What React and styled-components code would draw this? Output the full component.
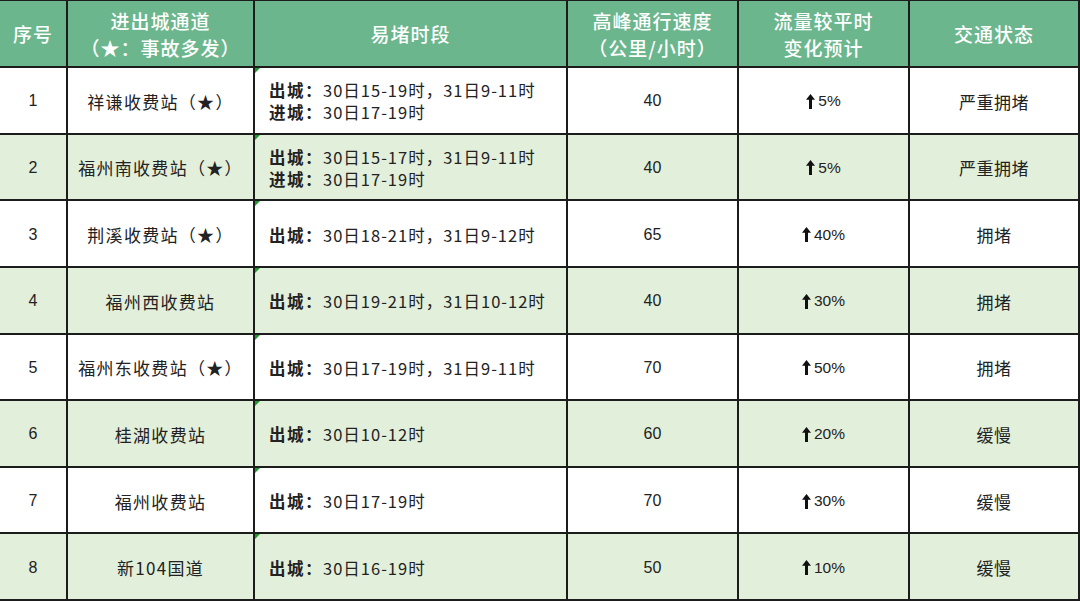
import React from 'react';
import styled, { createGlobalStyle } from 'styled-components';

const GlobalStyle = createGlobalStyle`
  html, body {
    margin: 0;
    padding: 0;
    background: #ffffff;
  }
  body {
    font-family: "Liberation Sans", "Noto Sans CJK SC", sans-serif;
    color: #222;
  }
`;

const Sheet = styled.div`
  display: grid;
  grid-template-columns: 66px 185px 311px 169px 169px 168px;
  grid-template-rows: 65px repeat(8, 1fr);
  gap: 2px;
  width: 1080px;
  height: 601px;
  box-sizing: border-box;
  padding: 1px 2px 2px 0;
  background: #1c1c1c;
`;

const HeadCell = styled.div`
  display: flex;
  align-items: center;
  justify-content: center;
  text-align: center;
  background: #6bb68d;
  color: #ffffff;
  font-family: "Noto Sans CJK SC", sans-serif;
  font-size: 19px;
  font-weight: 500;
  line-height: 27px;
  letter-spacing: 1px;
`;

const Cell = styled.div`
  position: relative;
  display: flex;
  align-items: center;
  justify-content: ${(p) => (p.$left ? 'flex-start' : 'center')};
  padding-left: ${(p) => (p.$left ? '14px' : '0')};
  padding-top: 2px;
  background: ${(p) => (p.$alt ? '#e2efda' : '#ffffff')};
  font-size: 16px;
  color: #222;
`;

const Marker = styled.span`
  position: absolute;
  left: 0;
  top: 0;
  width: 0;
  height: 0;
  border-top: 5px solid #1e9a2e;
  border-right: 5px solid transparent;
`;

const Station = styled.span`
  font-family: "Noto Sans CJK SC", sans-serif;
  font-size: 17px;
  letter-spacing: 1.3px;
`;

const Lines = styled.div`
  display: flex;
  flex-direction: column;
  font-family: "Noto Sans CJK SC", sans-serif;
  line-height: 22px;
  font-size: 16.5px;
  letter-spacing: 1px;
`;

const Label = styled.b`
  font-weight: 700;
  letter-spacing: 1.5px;
`;

const Num = styled.span`
  font-size: 16px;
`;

const Change = styled.span`
  display: inline-flex;
  align-items: center;
  gap: 3px;
  font-size: 15.5px;
`;

const Status = styled.span`
  font-family: "Noto Sans CJK SC", sans-serif;
  font-size: 17px;
  letter-spacing: 0.5px;
`;

const UpArrow = () => (
  <svg width="9" height="15" viewBox="0 0 9 15">
    <path d="M4.5 0 L9 5.8 L6 5.8 L6 15 L3 15 L3 5.8 L0 5.8 Z" fill="#111" />
  </svg>
);

const rows = [
  { name: '祥谦收费站（★）', times: [['出城', '30日15-19时，31日9-11时'], ['进城', '30日17-19时']], speed: 40, change: '5%', status: '严重拥堵' },
  { name: '福州南收费站（★）', times: [['出城', '30日15-17时，31日9-11时'], ['进城', '30日17-19时']], speed: 40, change: '5%', status: '严重拥堵' },
  { name: '荆溪收费站（★）', times: [['出城', '30日18-21时，31日9-12时']], speed: 65, change: '40%', status: '拥堵' },
  { name: '福州西收费站', times: [['出城', '30日19-21时，31日10-12时']], speed: 40, change: '30%', status: '拥堵' },
  { name: '福州东收费站（★）', times: [['出城', '30日17-19时，31日9-11时']], speed: 70, change: '50%', status: '拥堵' },
  { name: '桂湖收费站', times: [['出城', '30日10-12时']], speed: 60, change: '20%', status: '缓慢' },
  { name: '福州收费站', times: [['出城', '30日17-19时']], speed: 70, change: '30%', status: '缓慢' },
  { name: '新104国道', times: [['出城', '30日16-19时']], speed: 50, change: '10%', status: '缓慢' },
];

const App = () => (
  <>
    <GlobalStyle />
    <Sheet>
      <HeadCell>序号</HeadCell>
      <HeadCell>进出城通道<br />（★：事故多发）</HeadCell>
      <HeadCell>易堵时段</HeadCell>
      <HeadCell>高峰通行速度<br />（公里/小时）</HeadCell>
      <HeadCell>流量较平时<br />变化预计</HeadCell>
      <HeadCell>交通状态</HeadCell>
      {rows.map((r, i) => {
        const alt = i % 2 === 1;
        return (
          <React.Fragment key={i}>
            <Cell $alt={alt}><Num>{i + 1}</Num></Cell>
            <Cell $alt={alt}><Station>{r.name}</Station></Cell>
            <Cell $alt={alt} $left>
              <Marker />
              <Lines>
                {r.times.map(([label, text]) => (
                  <span key={label}>
                    <Label>{label}：</Label>{text}
                  </span>
                ))}
              </Lines>
            </Cell>
            <Cell $alt={alt}><Num>{r.speed}</Num></Cell>
            <Cell $alt={alt}><Change><UpArrow />{r.change}</Change></Cell>
            <Cell $alt={alt}><Status>{r.status}</Status></Cell>
          </React.Fragment>
        );
      })}
    </Sheet>
  </>
);

export default App;
